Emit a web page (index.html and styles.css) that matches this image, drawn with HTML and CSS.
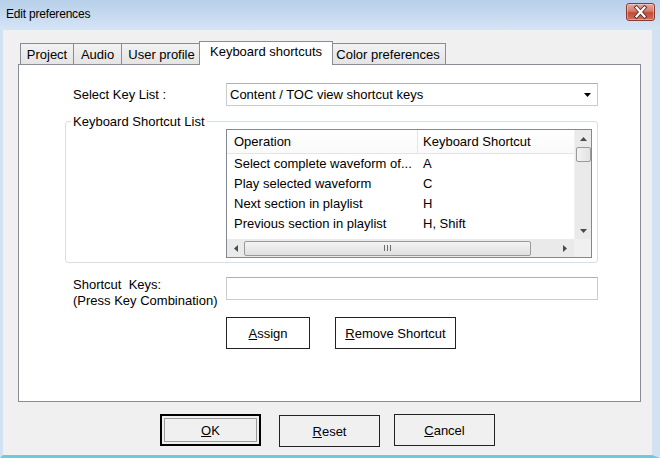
FILE: index.html
```html
<!DOCTYPE html>
<html>
<head>
<meta charset="utf-8">
<title>Edit preferences</title>
<link rel="stylesheet" href="styles.css">
</head>
<body>
<div class="window">
  <div class="titlebar">
    <span class="title">Edit preferences</span>
    <div class="close">
      <svg width="27" height="16" viewBox="0 0 27 16">
        <path d="M9.5 3.5 L17.5 12.5 M17.5 3.5 L9.5 12.5" stroke="#5a2a24" stroke-width="4" stroke-linecap="square"/>
        <path d="M9.5 3.5 L17.5 12.5 M17.5 3.5 L9.5 12.5" stroke="#ffffff" stroke-width="2.2" stroke-linecap="square"/>
      </svg>
    </div>
  </div>
  <div class="client">
    <div class="tabs">
      <div class="tab w-project">Project</div>
      <div class="tab w-audio">Audio</div>
      <div class="tab w-user">User profile</div>
      <div class="tab tab-selected w-keys">Keyboard shortcuts</div>
      <div class="tab w-color">Color preferences</div>
    </div>
    <div class="panel">
      <div class="form-row">
        <span class="label">Select Key List :</span>
        <div class="combo">
          <span>Content / TOC view shortcut keys</span>
          <svg class="combo-arrow" width="7" height="4" viewBox="0 0 7 4"><path d="M0 0H7L3.5 4Z" fill="#000"/></svg>
        </div>
      </div>
      <fieldset class="group">
        <legend>Keyboard Shortcut List</legend>
        <div class="listview">
          <div class="lv-body">
            <div class="lv-header">
              <div class="col1">Operation</div>
              <div class="col2">Keyboard Shortcut</div>
            </div>
            <div class="lv-row"><div class="col1">Select complete waveform of...</div><div class="col2">A</div></div>
            <div class="lv-row"><div class="col1">Play selected waveform</div><div class="col2">C</div></div>
            <div class="lv-row"><div class="col1">Next section in playlist</div><div class="col2">H</div></div>
            <div class="lv-row"><div class="col1">Previous section in playlist</div><div class="col2">H, Shift</div></div>
          </div>
          <div class="vscroll">
            <svg class="arr" width="7" height="4" viewBox="0 0 7 4"><path d="M0 4H7L3.5 0Z" fill="#4a4a4a"/></svg>
            <div class="vthumb"></div>
            <div class="vtrack"></div>
            <svg class="arr" width="7" height="4" viewBox="0 0 7 4"><path d="M0 0H7L3.5 4Z" fill="#4a4a4a"/></svg>
          </div>
          <div class="hscroll">
            <svg class="harr" width="4" height="7" viewBox="0 0 4 7"><path d="M4 0V7L0 3.5Z" fill="#4a4a4a"/></svg>
            <div class="hthumb"><span class="grip"></span><span class="grip"></span><span class="grip"></span></div>
            <div class="htrack"></div>
            <svg class="harr" width="4" height="7" viewBox="0 0 4 7"><path d="M0 0V7L4 3.5Z" fill="#4a4a4a"/></svg>
          </div>
          <div class="corner"></div>
        </div>
      </fieldset>
      <div class="form-row keys-row">
        <span class="label label-multi">Shortcut&nbsp; Keys:<br>(Press Key Combination)</span>
        <div class="textbox"></div>
      </div>
      <div class="actions">
        <button class="btn btn-assign"><u>A</u>ssign</button>
        <button class="btn btn-remove"><u>R</u>emove Shortcut</button>
      </div>
    </div>
    <div class="dialog-buttons">
      <button class="btn dbtn btn-default"><u>O</u>K</button>
      <button class="btn dbtn btn-reset"><u>R</u>eset</button>
      <button class="btn dbtn btn-cancel"><u>C</u>ancel</button>
    </div>
  </div>
</div>
</body>
</html>
```
FILE: styles.css
```css
* { box-sizing: border-box; }
html, body { margin: 0; padding: 0; }
body {
  width: 660px;
  height: 458px;
  overflow: hidden;
  font-family: "Liberation Sans", Arial, sans-serif;
  font-size: 13px;
  color: #000;
  background: #f0f0f0;
}
.window {
  width: 660px;
  height: 458px;
  display: flex;
  flex-direction: column;
  background: #f0f0f0;
}
.titlebar {
  height: 30px;
  flex: none;
  display: flex;
  align-items: center;
  justify-content: space-between;
  padding: 0 5px 0 6px;
  background: linear-gradient(#b7cfe9, #c9dcf0 60%, #d6e5f4);
}
.title {
  font-size: 12px;
  color: #000;
  letter-spacing: -0.2px;
  margin-top: -2px;
}
.close {
  width: 29px;
  height: 18px;
  margin-top: -6px;
  border: 1px solid #8b3a31;
  border-radius: 3px;
  background: linear-gradient(#e8a99c, #d57a69 45%, #c24a36 55%, #cf7060);
  display: flex;
  align-items: center;
  justify-content: center;
  box-shadow: inset 0 0 0 1px rgba(255,255,255,0.35);
}
.client {
  flex: 1;
  border-left: 3px solid #d3e2f2;
  border-right: 8px solid #d3e2f2;
  border-bottom: 3px solid #6ccadb;
  padding: 11px 12px 0 15px;
  display: flex;
  flex-direction: column;
}
.tabs {
  display: flex;
  align-items: flex-end;
  height: 23px;
  margin-left: 2px;
  position: relative;
  z-index: 1;
}
.tab {
  height: 21px;
  border: 1px solid #898c95;
  border-bottom: none;
  margin-right: -1px;
  background: linear-gradient(#f2f2f2, #e4e4e4);
  text-align: center;
  line-height: 22px;
  white-space: nowrap;
}
.tab-selected {
  height: 24px;
  margin: 0 -3px -1px -2px;
  background: #fff;
  line-height: 20px;
  position: relative;
  z-index: 2;
}
.w-project { width: 54px; }
.w-audio { width: 49px; }
.w-user { width: 81px; }
.w-keys { width: 134px; }
.w-color { width: 116px; }
.panel {
  height: 338px;
  width: 623px;
  background: #fff;
  border: 1px solid #898c95;
  padding: 18px 0 0 46px;
}
.form-row {
  display: grid;
  grid-template-columns: 161px 372px;
  align-items: center;
}
.label {
  padding-left: 8px;
  white-space: nowrap;
}
.combo {
  height: 23px;
  border: 1px solid #c9ccd1;
  border-top-color: #adb0b6;
  background: #fff;
  display: flex;
  align-items: center;
  justify-content: space-between;
  padding: 0 6px 0 3px;
}
.combo-arrow { margin-top: 1px; }
.group {
  margin: 8px 0 0 0;
  padding: 0 0 4px 0;
  width: 533px;
  border: 1px solid #d5dfe5;
  border-radius: 3px;
  min-width: 0;
}
.group legend {
  margin-left: 5px;
  padding: 0 2px;
  line-height: 15px;
}
.listview {
  margin-left: 160px;
  width: 366px;
  height: 129px;
  border: 1px solid #828790;
  display: grid;
  grid-template-columns: 1fr 17px;
  grid-template-rows: 1fr 18px;
  background: #fff;
}
.lv-body { overflow: hidden; }
.lv-header {
  display: flex;
  height: 24px;
  border-bottom: 1px solid #e5e5e5;
  background: linear-gradient(#fff, #fafafa);
}
.lv-header .col1 {
  border-right: 1px solid #e5e5e5;
}
.lv-header > div, .lv-row > div {
  line-height: 23px;
  white-space: nowrap;
  overflow: hidden;
}
.lv-row { display: flex; height: 20px; }
.lv-row > div { line-height: 19px; }
.col1 { width: 191px; padding-left: 7px; flex: none; }
.col2 { padding-left: 5px; flex: 1; }
.vscroll {
  background: #eaeaea;
  border-left: 1px solid #f0f0f0;
  display: flex;
  flex-direction: column;
  align-items: center;
  padding: 7px 0 6px;
}
.vthumb {
  width: 15px;
  height: 15px;
  margin-top: 6px;
  border: 1px solid #9a9a9a;
  border-radius: 2px;
  background: linear-gradient(90deg, #f3f3f3, #e2e2e2);
}
.vtrack { flex: 1; }
.hscroll {
  background: #eaeaea;
  display: flex;
  align-items: center;
  padding: 0 7px 0 7px;
}
.hthumb {
  width: 287px;
  height: 15px;
  margin-left: 6px;
  border: 1px solid #9a9a9a;
  border-radius: 2px;
  background: linear-gradient(#f3f3f3, #e0e0e0);
  display: flex;
  align-items: center;
  justify-content: center;
  gap: 2px;
}
.grip {
  width: 1px;
  height: 6px;
  background: #6a6a6a;
}
.htrack { flex: 1; }
.corner { background: #f0f0f0; }
.keys-row {
  margin-top: 14px;
  align-items: start;
}
.label-multi { line-height: 16px; }
.textbox {
  height: 23px;
  border: 1px solid #c9ccd1;
  border-top-color: #adb0b6;
  background: #fff;
}
.actions {
  display: flex;
  gap: 25px;
  margin: 8px 0 0 161px;
}
.btn {
  font-family: "Liberation Sans", Arial, sans-serif;
  font-size: 13px;
  color: #000;
  background: transparent;
  border: 1px solid #222;
  border-radius: 0;
  padding: 0;
  height: 32px;
  cursor: default;
}
.btn-assign { width: 84px; }
.btn-remove { width: 121px; }
.dialog-buttons {
  display: flex;
  align-items: center;
  margin-top: 11px;
  padding-left: 142px;
}
.dbtn { width: 101px; height: 32px; }
.btn-default {
  border: 2px solid #000;
  box-shadow: inset 0 0 0 2px #f0f0f0, inset 0 0 0 3px #9c9c9c;
}
.btn-reset { margin-left: 18px; margin-top: 2px; }
.btn-cancel { margin-left: 14px; }
```
